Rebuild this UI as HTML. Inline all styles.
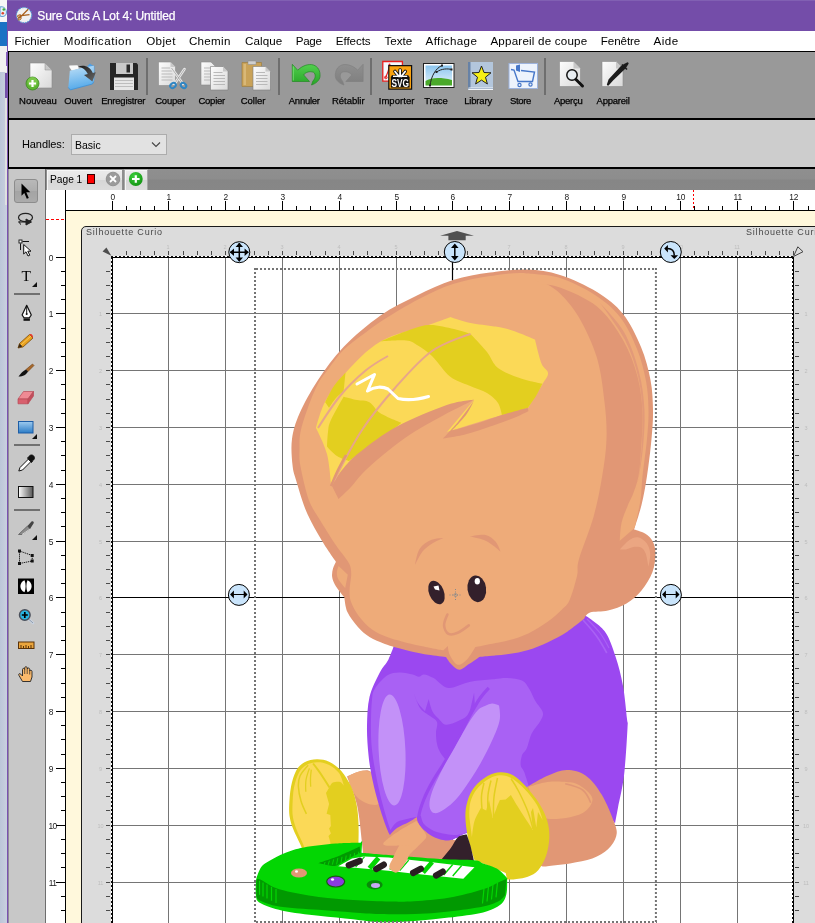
<!DOCTYPE html>
<html lang="fr"><head><meta charset="utf-8"><title>Sure Cuts A Lot 4: Untitled</title>
<style>
*{margin:0;padding:0;box-sizing:border-box}
html,body{width:815px;height:923px;overflow:hidden;background:#fff}
body{position:relative;font-family:"Liberation Sans",sans-serif;font-size:11px;color:#000}
.a{position:absolute;will-change:transform}
#title{left:7px;top:0;width:808px;height:31px;background:#744da9;border-top:1px solid #8160b3}
#pb{left:7px;top:31px;width:1px;height:892px;background:#7a52b0}
#title span{position:absolute;left:30.3px;top:7.5px;color:#fff;font-size:12px;letter-spacing:-0.1px;white-space:nowrap;-webkit-text-stroke:0.25px #fff}
#menu{left:8px;top:31px;width:807px;height:20px;background:#fff}
#menu span{position:absolute;top:2.8px;font-size:11.6px;white-space:nowrap}
#tb{left:8px;top:51px;width:815px;height:69px;background:#999;border-top:1px solid #000;border-left:1px solid #000;border-bottom:2px solid #000}
.tl{position:absolute;top:95.3px;font-size:9.5px;white-space:nowrap;color:#000;-webkit-text-stroke:0.25px #000}
.sep{position:absolute;top:58px;width:2px;height:37px;background:#6e6e6e}
#opt{left:8px;top:120px;width:815px;height:49px;background:#cdcdcd;border-left:1px solid #000;border-bottom:2px solid #000}
#tabs{left:46px;top:169px;width:769px;height:21px;background:linear-gradient(#8f8f8f,#8d8d8d 48%,#868686 52%,#878787)}
#pal{left:8px;top:169px;width:38px;height:760px;background:#c8c8c8;border-left:1px solid #5a4a7a}
</style></head>
<body>
<div class="a" style="left:0;top:0;width:7px;height:22px;background:#f6f6f6"></div>
<svg class="a" style="left:0;top:4px" width="7" height="16" viewBox="0 0 7 16"><path d="M0 3C3 2 6 4 6.500 8C6.500 11 5 12.500 2 12.500L0 12Z" fill="#e6eef6" stroke="#5b9bd0" stroke-width="1"/><circle cx="3.800" cy="5.500" r="1.300" fill="#3fae3a"/><circle cx="2.800" cy="9.300" r="1.300" fill="#e0442c"/></svg>
<div class="a" style="left:0;top:22px;width:7px;height:24px;background:#1b72c4"></div>
<div class="a" style="left:0;top:46px;width:7px;height:26px;background:#f1f1f1"></div>
<div class="a" style="left:0;top:72px;width:7px;height:851px;background:linear-gradient(90deg,#bcc6d9,#c9d0df)"></div>
<div class="a" style="left:5px;top:72px;width:2px;height:133px;background:#e0e1e0"></div>
<div class="a" style="left:6px;top:52px;width:1px;height:14px;background:#8a62c0"></div>
<div class="a" style="left:5px;top:73px;width:2px;height:25px;background:#7450a8"></div>
<div id="title" class="a"><svg class="a" style="left:8px;top:5px" width="18" height="18" viewBox="0 0 18 18"><circle cx="9.050" cy="9.100" r="7.600" fill="#f1f1f1" stroke="#5fa9d9" stroke-width="1.200" stroke-dasharray="1.300 1.100"/><path d="M4 12.400L13.200 3.200M4.500 9.800L14.500 8.600" stroke="#a8601c" stroke-width="1.300" fill="none"/><ellipse cx="4.600" cy="12.500" rx="1.800" ry="1.200" fill="none" stroke="#a8601c" stroke-width="1" transform="rotate(-40 4.600 12.500)"/><ellipse cx="4.300" cy="10" rx="1.700" ry="1.100" fill="none" stroke="#a8601c" stroke-width="1" transform="rotate(-10 4.300 10)"/></svg>
<span>Sure Cuts A Lot 4: Untitled</span></div>
<div id="pb" class="a"></div><div id="menu" class="a"><span style="left:6.6px;letter-spacing:0.08px">Fichier</span><span style="left:55.7px;letter-spacing:0.54px">Modification</span><span style="left:138.2px;letter-spacing:0.37px">Objet</span><span style="left:180.9px;letter-spacing:0.31px">Chemin</span><span style="left:237.1px;letter-spacing:0.07px">Calque</span><span style="left:287.7px;letter-spacing:-0.26px">Page</span><span style="left:327.8px;letter-spacing:-0.07px">Effects</span><span style="left:376.4px;letter-spacing:-0.00px">Texte</span><span style="left:417.6px;letter-spacing:0.39px">Affichage</span><span style="left:482.4px;letter-spacing:0.21px">Appareil de coupe</span><span style="left:592.8px;letter-spacing:-0.08px">Fenêtre</span><span style="left:645.5px;letter-spacing:0.53px">Aide</span></div>
<div id="tb" class="a"></div>
<svg class="a" style="left:0;top:52px" width="815" height="66" viewBox="0 52 815 66">
<defs>
<linearGradient id="pg" x1="0" y1="0" x2="1" y2="1"><stop offset="0" stop-color="#fdfdfd"/><stop offset="1" stop-color="#d9d9d9"/></linearGradient>
<linearGradient id="fold" x1="0" y1="0" x2="0.2" y2="1"><stop offset="0" stop-color="#bfe0f7"/><stop offset="1" stop-color="#55aaea"/></linearGradient><linearGradient id="arr" x1="0" y1="0" x2="1" y2="1"><stop offset="0" stop-color="#1a1a1a"/><stop offset="1" stop-color="#6a6a6a"/></linearGradient>
<linearGradient id="grn" x1="0" y1="0" x2="0" y2="1"><stop offset="0" stop-color="#52cf4e"/><stop offset="1" stop-color="#27a527"/></linearGradient>
<linearGradient id="gry" x1="0" y1="0" x2="0" y2="1"><stop offset="0" stop-color="#8f8f8f"/><stop offset="1" stop-color="#7e7e7e"/></linearGradient>
<linearGradient id="sky" x1="0" y1="0" x2="0" y2="1"><stop offset="0" stop-color="#8cc6ef"/><stop offset="1" stop-color="#e4f2fb"/></linearGradient>
</defs>
<!-- Nouveau -->
<g transform="translate(30 63)"><path d="M0 0H15L22 7V25H0Z" fill="url(#pg)" stroke="#8c8c8c" stroke-width=".6"/><path d="M15 0V7H22Z" fill="#c8c8c8" stroke="#8c8c8c" stroke-width=".5"/></g>
<circle cx="32.5" cy="83.5" r="6.5" fill="#5cb531" stroke="#3d8a1f" stroke-width=".8"/>
<circle cx="32.5" cy="82" r="5" fill="#8fd45c" opacity=".6"/>
<path d="M29 83.5H36M32.5 80V87" stroke="#fff" stroke-width="2.2"/>
<!-- Ouvert -->
<path d="M87.500 66L90 63.500L92 65L94.400 66V80L87.500 82Z" fill="#4f9fe4"/>
<path d="M69.300 67V65.500L77.500 65.200L79 68.500L72 71Z" fill="#fafafa"/>
<path d="M69.800 70.700L83.600 67.500L93.900 65.800V81.500L92.400 84L70.300 89.900L68.300 87.400Z" fill="url(#fold)"/>
<path d="M68.300 87.400L70.300 89.900L92.400 84L93.900 81.500" fill="none" stroke="#3d8fd6" stroke-width=".8"/>
<path d="M78.200 66.600C84 64.500 90 66.500 92.800 73L95.800 72.200L92.400 81.500L84 74.900L87.800 74C86 70 82.500 67.500 78.200 66.600Z" fill="url(#arr)"/>
<!-- Enregistrer -->
<path d="M110 63H136.500L138 64.500V90H110Z" fill="#262626"/>
<path d="M116 63H133V74H116Z" fill="#c9c9c9"/><path d="M126.500 64.500H130V72.500H126.500Z" fill="#2a2a2a"/>
<path d="M114 77.500H134V90H114Z" fill="#e6e6e6"/><path d="M115 80.500H133M115 83.500H133M115 86.500H133" stroke="#bdbdbd" stroke-width="1"/>
<!-- Couper -->
<g transform="translate(158.500 62)"><path d="M0 0H12L17 5V23.500H0Z" fill="url(#pg)" stroke="#8c8c8c" stroke-width=".6"/><path d="M12 0V5H17Z" fill="#c8c8c8"/><path d="M3 6H12M3 9H14M3 12H14M3 15H14M3 18H14" stroke="#b9b9b9"/></g>
<path d="M171.500 68L183 84M184.500 69L174.500 84" stroke="#e9e9e9" stroke-width="2.600" stroke-linecap="round"/>
<path d="M171.500 68L183 84M184.500 69L174.500 84" stroke="#8a8a8a" stroke-width=".6" fill="none"/>
<ellipse cx="173" cy="85.500" rx="3" ry="2.300" fill="none" stroke="#2f86c4" stroke-width="2" transform="rotate(-35 173 85.500)"/>
<ellipse cx="183.500" cy="85.500" rx="3" ry="2.300" fill="none" stroke="#2f86c4" stroke-width="2" transform="rotate(40 183.500 85.500)"/>
<!-- Copier -->
<g transform="translate(201 62)"><path d="M0 0H10L14.500 4.500V23H0Z" fill="url(#pg)" stroke="#8c8c8c" stroke-width=".6"/><path d="M3 6H11M3 9H11M3 12H11M3 15H11M3 18H11" stroke="#b9b9b9"/></g>
<g transform="translate(210.500 66.500)"><path d="M0 0H12.500L17.500 5V23.500H0Z" fill="url(#pg)" stroke="#7c7c7c" stroke-width=".6"/><path d="M12.500 0V5H17.500Z" fill="#c8c8c8"/><path d="M3 6H12M3 9H14.500M3 12H14.500M3 15H14.500M3 18H14.500" stroke="#b9b9b9"/></g>
<!-- Coller -->
<path d="M242 62.500H261.500V86.500H242Z" fill="#c9a258" stroke="#9b7a3a" stroke-width=".6"/>
<path d="M243.500 64H246V85H243.500Z" fill="#d9b877"/>
<path d="M248 61H256V64.500H248Z" fill="#cfcfcf" stroke="#8a8a8a" stroke-width=".5"/>
<g transform="translate(253 66.500)"><path d="M0 0H12.500L17.500 5V23.500H0Z" fill="url(#pg)" stroke="#7c7c7c" stroke-width=".6"/><path d="M12.500 0V5H17.500Z" fill="#c8c8c8"/><path d="M3 6H12M3 9H14.500M3 12H14.500M3 15H14.500M3 18H14.500" stroke="#b9b9b9"/></g>
<!-- Annuler -->
<path d="M292.300 64.300V81.500H309.500L303.600 74.900C306 72 309.500 71 313.400 72.200C316 74 315.800 78 312.800 81.200L311.500 85C316 83.500 319.500 80.500 320 76.600C320.500 71 318 66.500 313.400 65C308 63.500 302 66 297.700 70.200Z" fill="url(#grn)" stroke="#238a23" stroke-width=".7" stroke-linejoin="round"/>
<path d="M293.300 66.500V80.500" stroke="#7fe07a" stroke-width=".8"/>
<!-- Retablir -->
<path d="M363.1 64.3 V81.5 H345.9 L351.8 74.9 C349.4 72.0 345.9 71.0 342.0 72.2 C339.4 74.0 339.6 78.0 342.6 81.2 L343.9 85.0 C339.4 83.5 335.9 80.5 335.4 76.6 C334.9 71.0 337.4 66.5 342.0 65.0 C347.4 63.5 353.4 66.0 357.7 70.2 Z" fill="url(#gry)" stroke="#808080" stroke-width=".7" stroke-linejoin="round"/>
<!-- Importer -->
<path d="M382.800 61.500H402.400V81.200H382.800Z" fill="#f4fbff" stroke="#e82020" stroke-width="1.300"/>
<path d="M385.500 78C387.500 74 389 70 389.500 64.500" stroke="#e82020" stroke-width="1.200" fill="none"/><circle cx="385.800" cy="77.500" r="1.300" fill="none" stroke="#e82020" stroke-width="1"/><circle cx="389.500" cy="64.500" r="1" fill="#e82020"/>
<path d="M388.800 65.600H411.600V89.100H388.800Z" fill="#f9a20e" stroke="#111" stroke-width="1.200"/>
<g stroke="#111" stroke-width="3.600" stroke-linecap="round"><path d="M400.100 70V76M395 71.500L399 76.500M405.200 71.500L401.200 76.500M393 76.800H407.200"/></g>
<rect x="390.800" y="76.800" width="18.800" height="10.800" fill="#111"/>
<g stroke="#fff" stroke-width="1.800" stroke-linecap="round"><path d="M400.100 70V76M395 71.500L399 76.500M405.200 71.500L401.200 76.500"/></g>
<path d="M393 76.300H407.200" stroke="#fff" stroke-width="1.400"/>
<text x="400.200" y="86.600" font-family="Liberation Sans, sans-serif" font-weight="bold" font-size="10.800" fill="#fff" text-anchor="middle" textLength="17.500" lengthAdjust="spacingAndGlyphs">SVG</text>
<!-- Trace -->
<rect x="423.500" y="63.500" width="30.500" height="24" fill="#fff" stroke="#222" stroke-width="1"/>
<rect x="425.500" y="65.500" width="26.500" height="20" fill="url(#sky)"/>
<path d="M425.500 81C431 77.500 440 77 452 80V85.500H425.500Z" fill="#4aa92a"/>
<path d="M430 86C431 76 436 68 442 65.500M436.500 72C442 68.500 447 68.500 452 69.500" stroke="#222" stroke-width="1" fill="none"/>
<path d="M429 84.500h2v2h-2zM435.500 71h2v2h-2zM441 64.500h2v2h-2zM450.500 68.500h2v2h-2z" fill="#222"/>
<!-- Library -->
<path d="M468 62H493V90H468Z" fill="#b3c6dc"/>
<path d="M468 62H470.500V88H468Z" fill="#6782a6"/>
<path d="M468.500 87.500H493V90H468.500Z" fill="#f3f6fa"/><path d="M468 88.500H493" stroke="#7a93b5" stroke-width=".6"/>
<path d="M481.500 66L484 72.500L491 72.800L485.500 77.200L487.400 84L481.500 80.100L475.600 84L477.500 77.200L472 72.800L479 72.500Z" fill="#f6ef16" stroke="#222" stroke-width="1" stroke-linejoin="round"/>
<!-- Store -->
<rect x="509" y="63.500" width="28.500" height="25" fill="#edf3fc" stroke="#9db3dd" stroke-width="1"/>
<path d="M511 69.500L514 70L518 81.500H532.500L534.500 72L521 70.500" fill="none" stroke="#4677c9" stroke-width="1.400"/>
<path d="M516 65.500L520 64.500V72L516 70.500Z" fill="#4677c9"/>
<circle cx="519.500" cy="85" r="1.600" fill="none" stroke="#4677c9" stroke-width="1.200"/><circle cx="530.500" cy="84.500" r="1.600" fill="none" stroke="#4677c9" stroke-width="1.200"/>
<!-- Apercu -->
<g transform="translate(559.500 61.500)"><path d="M0 0H14L21 7V25H0Z" fill="url(#pg)" stroke="#8c8c8c" stroke-width=".6"/><path d="M14 0V7H21Z" fill="#c8c8c8"/></g>
<circle cx="572" cy="75" r="5.200" fill="#e9eef2" stroke="#111" stroke-width="1.500"/>
<path d="M576 79.500L582.500 86" stroke="#111" stroke-width="3" stroke-linecap="round"/>
<!-- Appareil -->
<g transform="translate(602 61.500)"><path d="M0 0H14L21 7V25H0Z" fill="url(#pg)" stroke="#8c8c8c" stroke-width=".6"/><path d="M14 0V7H21Z" fill="#c8c8c8"/></g>
<path d="M627.500 63.500L625 67.500L612 80L608 84.500L609.500 80L621.500 67L625.500 64.500Z" fill="#1c1c1c" stroke="#1c1c1c" stroke-width="2.200" stroke-linejoin="round"/>
<path d="M622 64.500L627 69.500" stroke="#1c1c1c" stroke-width="1.600"/>
</svg>
<div class="tl" style="left:19.1px;letter-spacing:-0.05px">Nouveau</div><div class="tl" style="left:64.2px;letter-spacing:-0.10px">Ouvert</div><div class="tl" style="left:101.2px;letter-spacing:-0.23px">Enregistrer</div><div class="tl" style="left:155.2px;letter-spacing:-0.21px">Couper</div><div class="tl" style="left:198.4px;letter-spacing:-0.22px">Copier</div><div class="tl" style="left:240.7px;letter-spacing:-0.00px">Coller</div><div class="tl" style="left:288.8px;letter-spacing:-0.26px">Annuler</div><div class="tl" style="left:332.0px;letter-spacing:-0.02px">Rétablir</div><div class="tl" style="left:378.7px;letter-spacing:0.06px">Importer</div><div class="tl" style="left:424.3px;letter-spacing:-0.13px">Trace</div><div class="tl" style="left:464.2px;letter-spacing:-0.18px">Library</div><div class="tl" style="left:510.1px;letter-spacing:-0.35px">Store</div><div class="tl" style="left:553.9px;letter-spacing:-0.26px">Aperçu</div><div class="tl" style="left:596.5px;letter-spacing:-0.21px">Appareil</div><div class="sep" style="left:145.5px"></div><div class="sep" style="left:277.5px"></div><div class="sep" style="left:370px"></div><div class="sep" style="left:543.5px"></div>
<div id="opt" class="a"></div>
<div class="a" style="left:22px;top:138px;font-size:11px;letter-spacing:-.1px;white-space:nowrap" id="hl">Handles:</div>
<div class="a" style="left:71px;top:134px;width:96px;height:21px;background:#e2e2e2;border:1px solid #acacac"></div>
<div class="a" style="left:75px;top:139px;font-size:10.5px;white-space:nowrap" id="bs">Basic</div>
<svg class="a" style="left:151px;top:141px" width="10" height="7" viewBox="0 0 10 7"><path d="M1 1.500L5 5.500L9 1.500" fill="none" stroke="#444" stroke-width="1.100"/></svg>
<div id="tabs" class="a"></div>
<div class="a" style="left:46px;top:169px;width:77px;height:21px;background:linear-gradient(#ececec,#e4e4e4 50%,#d6d6d6 52%,#dcdcdc);border:1px solid #8f8f8f;border-bottom:none;box-shadow:inset 1px 1px 0 #f6f6f6"></div>
<div class="a" style="left:49.500px;top:174px;font-size:10.200px;white-space:nowrap" id="pg1">Page 1</div>
<div class="a" style="left:87px;top:174px;width:8px;height:10px;background:#f00;border:1px solid #300"></div>
<svg class="a" style="left:105px;top:171px" width="16" height="16" viewBox="0 0 16 16"><circle cx="8" cy="8" r="6.800" fill="#9b9b9b" stroke="#888" stroke-width=".8"/><path d="M5 5L11 11M11 5L5 11" stroke="#fff" stroke-width="1.800"/></svg>
<div class="a" style="left:123.500px;top:169px;width:23.500px;height:21px;background:linear-gradient(#ececec,#e2e2e2 50%,#d6d6d6 52%,#dcdcdc);border:1px solid #a8a8a8;border-bottom:none;box-shadow:inset 1px 1px 0 #f6f6f6"></div>
<svg class="a" style="left:128px;top:171px" width="16" height="16" viewBox="0 0 16 16"><defs><radialGradient id="gb" cx=".4" cy=".3" r=".8"><stop offset="0" stop-color="#3ed03e"/><stop offset="1" stop-color="#0f8f0f"/></radialGradient></defs><circle cx="7.800" cy="8" r="6.900" fill="url(#gb)"/><path d="M4 8H11.600M7.800 4.200V11.800" stroke="#fff" stroke-width="2.200"/></svg>
<div id="pal" class="a"></div>
<svg class="a" style="left:8px;top:169px" width="38" height="754" viewBox="8 169 38 754">
<defs>
<linearGradient id="selb" x1="0" y1="0" x2="0" y2="1"><stop offset="0" stop-color="#b9b9b9"/><stop offset=".5" stop-color="#adadad"/><stop offset=".52" stop-color="#a4a4a4"/><stop offset="1" stop-color="#ababab"/></linearGradient>
<linearGradient id="blu" x1="0" y1="0" x2="0" y2="1"><stop offset="0" stop-color="#9fcbef"/><stop offset="1" stop-color="#2b7cc6"/></linearGradient>
<linearGradient id="bw" x1="0" y1="0" x2="1" y2="0"><stop offset="0" stop-color="#fff"/><stop offset="1" stop-color="#555"/></linearGradient>
</defs>
<rect x="8" y="169" width="1" height="754" fill="#8f8a9a"/>
<rect x="45" y="169" width="1" height="754" fill="#6e6e6e"/>
<!-- select -->
<rect x="14.500" y="179.500" width="23" height="23" rx="2.500" fill="url(#selb)" stroke="#8c8c8c"/>
<path d="M21.500 183.500V195.700L24.300 193L26.800 198.800L28.800 198L26.300 192.300H30.300Z" fill="#000"/>
<!-- lasso -->
<ellipse cx="25.500" cy="217.500" rx="7" ry="4.200" fill="none" stroke="#222" stroke-width="1.200"/>
<path d="M18 222H26M26 219L31.500 222L26 225Z" fill="#222" stroke="#222" stroke-width="1"/>
<path d="M20.500 220.500C19 222 19.500 224 21 224.500" fill="none" stroke="#222" stroke-width="1"/>
<!-- node select -->
<rect x="19" y="240" width="3" height="3" fill="#fff" stroke="#111" stroke-width=".9"/>
<path d="M22.500 241.500H29M20.500 243.500V250" stroke="#111" stroke-width="1"/>
<path d="M23.700 244.500V254L26 251.800L28 256L29.800 255.200L27.800 251.200H31Z" fill="#fff" stroke="#111" stroke-width="1"/>
<!-- T -->
<text x="26.300" y="280.500" font-family="Liberation Serif, serif" font-size="15.500" text-anchor="middle" fill="#000">T</text>
<path d="M37 282V287H32Z" fill="#111"/>
<rect x="14" y="293" width="26" height="2" fill="#707070"/>
<!-- pen nib -->
<path d="M26.700 305.300L31.300 315L29.300 317.800H24.100L22.100 315Z" fill="#fff" stroke="#111" stroke-width="1.200" stroke-linejoin="round"/>
<path d="M26.700 306V313.500" stroke="#111" stroke-width="1"/><circle cx="26.700" cy="314" r="1" fill="#111"/>
<rect x="23.500" y="318.500" width="6.400" height="2.300" fill="#111"/>
<!-- pencil -->
<path d="M18 348L19.500 343.500L29.500 334.500L33 338L23 347Z" fill="#e9a11e" stroke="#7a4a0a" stroke-width=".8" stroke-linejoin="round"/>
<path d="M29.500 334.500C31 333 33.500 335 33 338L31 336Z" fill="#e8382c"/>
<path d="M18 348L19.500 343.500L22.500 346.500Z" fill="#3a2a1a"/>
<path d="M21 345L31 336" stroke="#f7c75a" stroke-width="1"/>
<!-- brush -->
<path d="M26 369.500L32.500 364L34 365.500L28 371.500Z" fill="#a8692c" stroke="#6e3f14" stroke-width=".6"/>
<path d="M18.500 376.500C21 373 23 371 26 369.500L28 371.500C26.500 374.500 23 376.500 18.500 376.500Z" fill="#111"/>
<!-- eraser -->
<path d="M18 399L23.500 391.500H33.500L28 399Z" fill="#ef8a94" stroke="#b84a58" stroke-width=".7"/>
<path d="M18 399H28V403.800H18Z" fill="#d8606e" stroke="#b84a58" stroke-width=".7"/>
<path d="M28 399L33.500 391.500V396L28 403.800Z" fill="#c24e5c" stroke="#b84a58" stroke-width=".7"/>
<!-- rectangle -->
<rect x="18.500" y="421.500" width="14.500" height="11.500" fill="url(#blu)" stroke="#1d5da6"/>
<path d="M37 434V439H32Z" fill="#111"/>
<rect x="14" y="444" width="26" height="2" fill="#707070"/>
<!-- eyedropper -->
<path d="M18.800 471L20 467.500L28.500 459L31 461.500L22.500 470Z" fill="#fff" stroke="#111" stroke-width="1"/>
<path d="M27.500 458L29 456.500C30 454.500 33 454.500 34 456.500C35 458 34 460 32.500 461L31.500 462.500Z" fill="#111" stroke="#111" stroke-width="1"/>
<!-- gradient -->
<rect x="18.500" y="486.500" width="14.500" height="11" fill="url(#bw)" stroke="#111"/>
<rect x="14" y="509" width="26" height="2" fill="#707070"/>
<!-- knife -->
<path d="M18.500 534.500L27.500 526L30 529L22 534.500Z" fill="#8c8c8c" stroke="#555" stroke-width=".7"/>
<path d="M27.500 526L31.500 521.500C33 520.500 34.500 522 33.500 523.500L30 529Z" fill="#444"/>
<path d="M22 534.500L30 529" stroke="#eee" stroke-width=".8"/>
<path d="M37 535V540H32Z" fill="#111"/>
<!-- distort -->
<path d="M19.500 551L32.200 555.500V561L19.500 563.500Z" fill="none" stroke="#111" stroke-width="1" stroke-dasharray="1.200 .8"/>
<path d="M18 549.500h3v3h-3zM30.700 554h3v3h-3zM30.700 559.500h3v3h-3zM18 562h3v3h-3z" fill="#111"/>
<!-- warp -->
<rect x="18" y="578.500" width="16" height="15.500" fill="#000"/>
<path d="M24.500 580.200C19 582.500 19 590 24.500 592.300C26 589 26 583.500 24.500 580.200Z" fill="#fff"/>
<path d="M27.500 580.200C33 582.500 33 590 27.500 592.300C26 589 26 583.500 27.500 580.200Z" fill="#fff"/>
<!-- zoom -->
<path d="M28.500 619L33 623" stroke="#c9d3e0" stroke-width="2.600" stroke-linecap="round"/>
<path d="M28.500 619L33 623" stroke="#6a7688" stroke-width=".6"/>
<circle cx="24.800" cy="615" r="5.300" fill="#27b5e2" stroke="#4a4f5a" stroke-width="1.500"/>
<path d="M21.800 615H27.800M24.800 612V618" stroke="#000" stroke-width="1.700"/>
<!-- ruler -->
<rect x="18.500" y="642" width="15.500" height="6.500" fill="#eaa53c" stroke="#5a3208" stroke-width="1"/>
<path d="M21 645V648M23.500 646V648M26 645V648M28.500 646V648M31 645V648" stroke="#5a3208" stroke-width="1"/>
<!-- hand -->
<path d="M22.500 681.500L19 675.500C18 674 19.500 673 20.800 674.200L22.500 676V669.500C22.500 668 24.500 668 24.700 669.500V667.800C24.900 666.300 27 666.300 27.200 667.800V669C27.400 667.600 29.500 667.700 29.700 669.200V671C30 669.800 32 670 32 671.500V677L30.500 681.500Z" fill="#fbba6c" stroke="#222" stroke-width=".9" stroke-linejoin="round"/>
<path d="M24.700 669.500V674M27.200 669V674M29.700 671V674.500" stroke="#222" stroke-width=".7"/>
</svg>
<svg class="a" style="left:46px;top:190px" width="769" height="733" viewBox="46 190 769 733" font-family="Liberation Sans, sans-serif" font-size="8.4" fill="#1a1a1a"><rect x="46" y="190" width="769" height="21" fill="#fff"/><rect x="46" y="190" width="20" height="733" fill="#fff"/><rect x="65" y="190" width="1" height="733" fill="#000"/><rect x="65" y="210" width="750" height="1" fill="#000"/><text x="112.8" y="199.8" text-anchor="middle">0</text><text x="168.8" y="199.8" text-anchor="middle">1</text><text x="225.8" y="199.8" text-anchor="middle">2</text><text x="282.8" y="199.8" text-anchor="middle">3</text><text x="339.8" y="199.8" text-anchor="middle">4</text><text x="396.8" y="199.8" text-anchor="middle">5</text><text x="452.8" y="199.8" text-anchor="middle">6</text><text x="509.8" y="199.8" text-anchor="middle">7</text><text x="566.8" y="199.8" text-anchor="middle">8</text><text x="623.8" y="199.8" text-anchor="middle">9</text><text x="680.8" y="199.8" text-anchor="middle">10</text><text x="737.8" y="199.8" text-anchor="middle">11</text><text x="793.8" y="199.8" text-anchor="middle">12</text><text x="51" y="260.8" text-anchor="middle" >0</text><text x="51" y="316.8" text-anchor="middle" >1</text><text x="51" y="373.8" text-anchor="middle" >2</text><text x="51" y="430.8" text-anchor="middle" >3</text><text x="51" y="487.8" text-anchor="middle" >4</text><text x="51" y="544.8" text-anchor="middle" >5</text><text x="51" y="600.8" text-anchor="middle" >6</text><text x="51" y="657.8" text-anchor="middle" >7</text><text x="51" y="714.8" text-anchor="middle" >8</text><text x="51" y="771.8" text-anchor="middle" >9</text><text x="52.5" y="828.8" text-anchor="middle" letter-spacing='-0.6'>10</text><text x="52.5" y="885.8" text-anchor="middle" letter-spacing='-0.6'>11</text><path d="M112 201h1v9h-1zM126 206h1v4h-1zM140 206h1v4h-1zM154 206h1v4h-1zM168 201h1v9h-1zM183 206h1v4h-1zM197 206h1v4h-1zM211 206h1v4h-1zM225 201h1v9h-1zM239 206h1v4h-1zM254 206h1v4h-1zM268 206h1v4h-1zM282 201h1v9h-1zM296 206h1v4h-1zM310 206h1v4h-1zM325 206h1v4h-1zM339 201h1v9h-1zM353 206h1v4h-1zM367 206h1v4h-1zM381 206h1v4h-1zM396 201h1v9h-1zM410 206h1v4h-1zM424 206h1v4h-1zM438 206h1v4h-1zM452 201h1v9h-1zM467 206h1v4h-1zM481 206h1v4h-1zM495 206h1v4h-1zM509 201h1v9h-1zM523 206h1v4h-1zM538 206h1v4h-1zM552 206h1v4h-1zM566 201h1v9h-1zM580 206h1v4h-1zM594 206h1v4h-1zM609 206h1v4h-1zM623 201h1v9h-1zM637 206h1v4h-1zM651 206h1v4h-1zM665 206h1v4h-1zM680 201h1v9h-1zM694 206h1v4h-1zM708 206h1v4h-1zM722 206h1v4h-1zM737 201h1v9h-1zM751 206h1v4h-1zM765 206h1v4h-1zM779 206h1v4h-1zM793 201h1v9h-1zM808 206h1v4h-1zM56 257h9v1h-9zM61 271h4v1h-4zM61 285h4v1h-4zM61 299h4v1h-4zM56 313h9v1h-9zM61 328h4v1h-4zM61 342h4v1h-4zM61 356h4v1h-4zM56 370h9v1h-9zM61 384h4v1h-4zM61 399h4v1h-4zM61 413h4v1h-4zM56 427h9v1h-9zM61 441h4v1h-4zM61 455h4v1h-4zM61 470h4v1h-4zM56 484h9v1h-9zM61 498h4v1h-4zM61 512h4v1h-4zM61 526h4v1h-4zM56 541h9v1h-9zM61 555h4v1h-4zM61 569h4v1h-4zM61 583h4v1h-4zM56 597h9v1h-9zM61 612h4v1h-4zM61 626h4v1h-4zM61 640h4v1h-4zM56 654h9v1h-9zM61 668h4v1h-4zM61 683h4v1h-4zM61 697h4v1h-4zM56 711h9v1h-9zM61 725h4v1h-4zM61 739h4v1h-4zM61 754h4v1h-4zM56 768h9v1h-9zM61 782h4v1h-4zM61 796h4v1h-4zM61 810h4v1h-4zM56 825h9v1h-9zM61 839h4v1h-4zM61 853h4v1h-4zM61 867h4v1h-4zM56 882h9v1h-9zM61 896h4v1h-4zM61 910h4v1h-4z" fill="#000"/><path d="M46 219.5H65" stroke="#f00" stroke-width="1" stroke-dasharray="3 2"/><path d="M693.5 190V210" stroke="#f00" stroke-width="1" stroke-dasharray="2 2"/></svg>
<svg class="a" style="left:66px;top:211px" width="749" height="712" viewBox="66 211 749 712" font-family="Liberation Sans, sans-serif"><rect x="66" y="211" width="749" height="712" fill="#fff8dc"/><rect x="81.5" y="226.5" width="760" height="720" rx="4.5" fill="#dcdcdc" stroke="#1a1a1a" stroke-width="1"/><text x="86" y="235" font-size="9" fill="#484848" letter-spacing="0.8">Silhouette Curio</text><text x="746" y="235" font-size="9" fill="#484848" letter-spacing="0.8">Silhouette Curio</text><rect x="112" y="257" width="682" height="666" fill="#fff"/><path d="M168 257h1v700h-1zM225 257h1v700h-1zM282 257h1v700h-1zM339 257h1v700h-1zM396 257h1v700h-1zM452 257h1v700h-1zM509 257h1v700h-1zM566 257h1v700h-1zM623 257h1v700h-1zM680 257h1v700h-1zM737 257h1v700h-1zM112 313h681v1h-681zM112 370h681v1h-681zM112 427h681v1h-681zM112 484h681v1h-681zM112 541h681v1h-681zM112 654h681v1h-681zM112 711h681v1h-681zM112 768h681v1h-681zM112 825h681v1h-681zM112 882h681v1h-681z" fill="#757575"/><rect x="112" y="597" width="681" height="1" fill="#000"/><path d="M111 256.5H794" stroke="#fff" stroke-width="1"/><path d="M111 256.5H794" stroke="#111" stroke-dasharray="2 2"/><path d="M111.5 257V923" stroke="#fff" stroke-width="1"/><path d="M111.5 257V923" stroke="#111" stroke-dasharray="2 2"/><path d="M792.5 257V923" stroke="#fff" stroke-width="1"/><path d="M792.5 257V923" stroke="#111" stroke-dasharray="2 2"/><path d="M112 257.5H794M112.5 257V923M793.5 257V923" stroke="#000" stroke-width="1" fill="none"/><path d="M126 251h1v4h-1zM140 251h1v4h-1zM154 251h1v4h-1zM168 251h1v4h-1zM183 251h1v4h-1zM197 251h1v4h-1zM211 251h1v4h-1zM225 251h1v4h-1zM239 251h1v4h-1zM254 251h1v4h-1zM268 251h1v4h-1zM282 251h1v4h-1zM296 251h1v4h-1zM310 251h1v4h-1zM325 251h1v4h-1zM339 251h1v4h-1zM353 251h1v4h-1zM367 251h1v4h-1zM381 251h1v4h-1zM396 251h1v4h-1zM410 251h1v4h-1zM424 251h1v4h-1zM438 251h1v4h-1zM452 251h1v4h-1zM467 251h1v4h-1zM481 251h1v4h-1zM495 251h1v4h-1zM509 251h1v4h-1zM523 251h1v4h-1zM538 251h1v4h-1zM552 251h1v4h-1zM566 251h1v4h-1zM580 251h1v4h-1zM594 251h1v4h-1zM609 251h1v4h-1zM623 251h1v4h-1zM637 251h1v4h-1zM651 251h1v4h-1zM665 251h1v4h-1zM680 251h1v4h-1zM694 251h1v4h-1zM708 251h1v4h-1zM722 251h1v4h-1zM737 251h1v4h-1zM751 251h1v4h-1zM765 251h1v4h-1zM779 251h1v4h-1zM793 251h1v4h-1zM106 271h4v1h-4zM795 271h4v1h-4zM106 285h4v1h-4zM795 285h4v1h-4zM106 299h4v1h-4zM795 299h4v1h-4zM106 313h4v1h-4zM795 313h4v1h-4zM106 328h4v1h-4zM795 328h4v1h-4zM106 342h4v1h-4zM795 342h4v1h-4zM106 356h4v1h-4zM795 356h4v1h-4zM106 370h4v1h-4zM795 370h4v1h-4zM106 384h4v1h-4zM795 384h4v1h-4zM106 399h4v1h-4zM795 399h4v1h-4zM106 413h4v1h-4zM795 413h4v1h-4zM106 427h4v1h-4zM795 427h4v1h-4zM106 441h4v1h-4zM795 441h4v1h-4zM106 455h4v1h-4zM795 455h4v1h-4zM106 470h4v1h-4zM795 470h4v1h-4zM106 484h4v1h-4zM795 484h4v1h-4zM106 498h4v1h-4zM795 498h4v1h-4zM106 512h4v1h-4zM795 512h4v1h-4zM106 526h4v1h-4zM795 526h4v1h-4zM106 541h4v1h-4zM795 541h4v1h-4zM106 555h4v1h-4zM795 555h4v1h-4zM106 569h4v1h-4zM795 569h4v1h-4zM106 583h4v1h-4zM795 583h4v1h-4zM106 597h4v1h-4zM795 597h4v1h-4zM106 612h4v1h-4zM795 612h4v1h-4zM106 626h4v1h-4zM795 626h4v1h-4zM106 640h4v1h-4zM795 640h4v1h-4zM106 654h4v1h-4zM795 654h4v1h-4zM106 668h4v1h-4zM795 668h4v1h-4zM106 683h4v1h-4zM795 683h4v1h-4zM106 697h4v1h-4zM795 697h4v1h-4zM106 711h4v1h-4zM795 711h4v1h-4zM106 725h4v1h-4zM795 725h4v1h-4zM106 739h4v1h-4zM795 739h4v1h-4zM106 754h4v1h-4zM795 754h4v1h-4zM106 768h4v1h-4zM795 768h4v1h-4zM106 782h4v1h-4zM795 782h4v1h-4zM106 796h4v1h-4zM795 796h4v1h-4zM106 810h4v1h-4zM795 810h4v1h-4zM106 825h4v1h-4zM795 825h4v1h-4zM106 839h4v1h-4zM795 839h4v1h-4zM106 853h4v1h-4zM795 853h4v1h-4zM106 867h4v1h-4zM795 867h4v1h-4zM106 882h4v1h-4zM795 882h4v1h-4zM106 896h4v1h-4zM795 896h4v1h-4zM106 910h4v1h-4zM795 910h4v1h-4z" fill="#4a4a4a"/><text x="168" y="248.5" font-size="5.5" fill="#bdbdbd" text-anchor="middle">1</text><text x="225" y="248.5" font-size="5.5" fill="#bdbdbd" text-anchor="middle">2</text><text x="282" y="248.5" font-size="5.5" fill="#bdbdbd" text-anchor="middle">3</text><text x="339" y="248.5" font-size="5.5" fill="#bdbdbd" text-anchor="middle">4</text><text x="396" y="248.5" font-size="5.5" fill="#bdbdbd" text-anchor="middle">5</text><text x="452" y="248.5" font-size="5.5" fill="#bdbdbd" text-anchor="middle">6</text><text x="509" y="248.5" font-size="5.5" fill="#bdbdbd" text-anchor="middle">7</text><text x="566" y="248.5" font-size="5.5" fill="#bdbdbd" text-anchor="middle">8</text><text x="623" y="248.5" font-size="5.5" fill="#bdbdbd" text-anchor="middle">9</text><text x="680" y="248.5" font-size="5.5" fill="#bdbdbd" text-anchor="middle">10</text><text x="737" y="248.5" font-size="5.5" fill="#bdbdbd" text-anchor="middle">11</text><text x="100.5" y="315.5" font-size="5.5" fill="#bdbdbd" text-anchor="middle">1</text><text x="806" y="315.5" font-size="5.5" fill="#bdbdbd" text-anchor="middle">1</text><text x="100.5" y="372.5" font-size="5.5" fill="#bdbdbd" text-anchor="middle">2</text><text x="806" y="372.5" font-size="5.5" fill="#bdbdbd" text-anchor="middle">2</text><text x="100.5" y="429.5" font-size="5.5" fill="#bdbdbd" text-anchor="middle">3</text><text x="806" y="429.5" font-size="5.5" fill="#bdbdbd" text-anchor="middle">3</text><text x="100.5" y="486.5" font-size="5.5" fill="#bdbdbd" text-anchor="middle">4</text><text x="806" y="486.5" font-size="5.5" fill="#bdbdbd" text-anchor="middle">4</text><text x="100.5" y="543.5" font-size="5.5" fill="#bdbdbd" text-anchor="middle">5</text><text x="806" y="543.5" font-size="5.5" fill="#bdbdbd" text-anchor="middle">5</text><text x="100.5" y="599.5" font-size="5.5" fill="#bdbdbd" text-anchor="middle">6</text><text x="806" y="599.5" font-size="5.5" fill="#bdbdbd" text-anchor="middle">6</text><text x="100.5" y="656.5" font-size="5.5" fill="#bdbdbd" text-anchor="middle">7</text><text x="806" y="656.5" font-size="5.5" fill="#bdbdbd" text-anchor="middle">7</text><text x="100.5" y="713.5" font-size="5.5" fill="#bdbdbd" text-anchor="middle">8</text><text x="806" y="713.5" font-size="5.5" fill="#bdbdbd" text-anchor="middle">8</text><text x="100.5" y="770.5" font-size="5.5" fill="#bdbdbd" text-anchor="middle">9</text><text x="806" y="770.5" font-size="5.5" fill="#bdbdbd" text-anchor="middle">9</text><text x="100.5" y="827.5" font-size="5.5" fill="#bdbdbd" text-anchor="middle">10</text><text x="806" y="827.5" font-size="5.5" fill="#bdbdbd" text-anchor="middle">10</text><text x="100.5" y="884.5" font-size="5.5" fill="#bdbdbd" text-anchor="middle">11</text><text x="806" y="884.5" font-size="5.5" fill="#bdbdbd" text-anchor="middle">11</text><path d="M102.600 251.500L106.400 247.400L111.300 255.700Z" fill="#4d4d4d"/><path d="M793.500 256.500L797.800 246.800L803 251.700Z" fill="none" stroke="#444" stroke-width="1"/></svg>
<svg class="a" style="left:240px;top:260px" width="430" height="663" viewBox="240 260 430 663">
<path d="M347.0 776.5C347.0 776.5 356.8 771.7 361.0 771.0C365.2 770.3 367.8 769.3 372.0 772.5C376.2 775.7 382.2 782.9 386.0 790.0C389.8 797.1 395.0 815.0 395.0 815.0L435.0 815.0C435.0 815.0 444.2 833.0 450.0 838.0C455.8 843.0 466.7 838.8 470.0 845.0C473.3 851.2 470.0 875.0 470.0 875.0L365.0 875.0C365.0 875.0 363.3 854.7 362.0 843.0C360.7 831.3 359.5 816.1 357.0 805.0C354.5 793.9 347.0 776.5 347.0 776.5Z" fill="#e19775"/>
<path d="M348.5 776.0C348.5 776.0 357.1 771.6 361.0 771.0C364.9 770.4 368.7 771.7 372.0 772.5C375.3 773.3 381.0 776.0 381.0 776.0C381.0 776.0 382.7 796.2 381.0 801.0C379.3 805.8 374.8 805.0 371.0 804.5C367.2 804.0 361.5 801.2 358.0 798.0C354.5 794.8 351.6 789.2 350.0 785.5C348.4 781.8 348.5 776.0 348.5 776.0Z" fill="#eeab79"/>
<path d="M396.0 640.0C396.0 640.0 391.3 653.8 388.6 659.2C385.9 664.6 383.0 666.2 379.8 672.5C376.6 678.8 371.6 688.1 369.5 697.0C367.4 705.9 367.2 716.3 367.0 726.0C366.8 735.7 367.6 746.0 368.5 755.0C369.4 764.0 370.7 771.3 372.5 780.0C374.3 788.7 377.1 798.8 379.5 807.0C381.9 815.2 385.2 824.3 387.0 829.0C388.8 833.7 390.0 835.0 390.0 835.0C390.0 835.0 393.8 830.2 397.0 828.0C400.2 825.8 405.7 823.8 409.0 822.0C412.3 820.2 417.0 817.0 417.0 817.0C417.0 817.0 416.7 820.4 419.0 823.5C421.3 826.6 426.2 832.7 431.0 835.5C435.8 838.3 442.7 840.7 448.0 840.5C453.3 840.3 459.3 835.9 463.0 834.5C466.7 833.1 470.0 832.0 470.0 832.0C470.0 832.0 505.0 805.3 520.0 800.0C535.0 794.7 546.7 798.3 560.0 800.0C573.3 801.7 590.8 806.1 600.0 810.0C609.2 813.9 615.0 823.5 615.0 823.5C615.0 823.5 616.5 815.5 618.0 807.5C619.5 799.5 622.4 788.8 624.0 775.5C625.6 762.2 627.0 737.4 627.5 728.0C628.0 718.6 627.8 726.0 627.0 719.0C626.2 712.0 624.9 696.4 623.0 686.0C621.1 675.6 618.6 665.7 615.5 656.5C612.4 647.3 609.7 637.9 604.5 631.0C599.3 624.1 584.5 615.0 584.5 615.0L560.0 600.0L420.0 600.0L396.0 640.0Z" fill="#9b48f0"/>
<path d="M374.7 689.0C377.2 684.9 382.9 678.4 387.0 675.6C391.1 672.8 395.0 672.6 399.3 672.4C403.6 672.2 409.5 673.7 412.8 674.4C416.1 675.1 417.1 676.8 418.9 676.8C420.7 676.8 421.4 674.2 423.8 674.4C426.2 674.6 429.5 675.8 433.6 678.0C437.7 680.2 442.2 687.3 448.3 687.9C454.4 688.5 463.0 683.1 470.4 681.7C477.8 680.3 486.4 679.9 492.5 679.3C498.6 678.7 502.3 677.8 507.2 678.0C512.1 678.2 518.3 678.7 522.0 680.5C525.7 682.3 527.0 685.5 529.3 689.0C531.5 692.5 533.2 697.4 535.5 701.3C537.8 705.2 542.0 709.1 542.8 712.4C543.6 715.7 542.2 717.5 540.4 721.0C538.6 724.5 534.0 728.8 531.8 733.3C529.5 737.8 528.5 744.3 526.9 748.0C525.3 751.7 523.0 752.4 522.0 755.3C521.0 758.2 520.3 762.3 520.7 765.2C521.1 768.1 522.9 768.4 524.4 772.5C525.9 776.6 530.0 790.0 530.0 790.0L478.0 800.0L468.0 832.0C468.0 832.0 461.7 834.7 458.0 835.0C454.3 835.3 450.0 834.7 446.0 834.0C442.0 833.3 437.7 832.7 434.0 831.0C430.3 829.3 426.2 826.5 424.0 824.0C421.8 821.5 421.0 816.0 421.0 816.0C421.0 816.0 413.0 817.5 409.0 818.5C405.0 819.5 400.1 820.1 397.0 822.0C393.9 823.9 390.5 830.0 390.5 830.0C390.5 830.0 388.2 824.0 386.5 818.0C384.8 812.0 381.9 802.0 380.0 794.0C378.1 786.0 376.4 778.2 375.0 770.0C373.6 761.8 372.2 753.3 371.5 745.0C370.8 736.7 370.9 727.5 371.0 720.0C371.1 712.5 371.4 705.2 372.0 700.0C372.6 694.8 372.2 693.1 374.7 689.0Z" fill="#a961f4"/>
<path d="M412.8 690.3C412.8 690.3 415.7 699.1 417.7 702.6C419.7 706.1 425.0 711.2 425.0 711.2L428.7 698.9C428.7 698.9 430.8 707.9 432.4 711.2C434.0 714.5 436.2 716.2 438.5 718.5C440.8 720.8 442.6 724.3 445.9 724.7C449.2 725.1 454.7 722.5 458.2 721.0C461.7 719.5 464.7 718.0 466.7 716.0C468.7 714.0 470.4 708.7 470.4 708.7L474.1 692.8L475.0 707.0L488.8 687.9C488.8 687.9 483.3 694.3 480.2 699.0C477.1 703.7 474.1 709.5 470.4 716.0C466.7 722.5 462.3 730.8 458.2 738.2C454.1 745.6 445.9 760.2 445.9 760.2C445.9 760.2 441.5 754.7 440.0 752.0C438.5 749.3 437.7 747.2 437.0 744.0C436.3 740.8 436.0 736.7 436.0 733.0C436.0 729.3 438.0 724.8 437.0 722.0C436.0 719.2 432.8 718.3 430.0 716.0C427.2 713.7 422.9 712.3 420.0 708.0C417.1 703.7 412.8 690.3 412.8 690.3Z" fill="#9b48f0"/>
<path d="M488.8 687.9C488.8 687.9 483.3 693.6 480.2 698.0C477.1 702.4 474.1 707.8 470.4 714.5C466.7 721.2 462.3 730.6 458.2 738.2C454.1 745.8 450.0 753.2 445.9 760.2C441.8 767.2 437.3 773.4 433.6 779.9C429.9 786.4 426.2 793.4 423.8 799.5C421.4 805.6 419.1 812.2 418.9 816.7C418.7 821.2 420.2 823.6 422.6 826.5C425.1 829.4 429.7 832.1 433.6 833.9C437.5 835.6 441.5 836.6 445.9 837.0C450.3 837.4 460.0 836.0 460.0 836.0" fill="none" stroke="#9b48f0" stroke-width="3.2" stroke-linejoin="round"/>
<path d="M583.0 620.0C583.0 620.0 592.5 630.5 596.5 636.0C600.5 641.5 606.8 653.0 606.8 653.0" fill="none" stroke="#a961f4" stroke-width="1.6"/>
<path d="M587.0 619.0C587.0 619.0 596.3 628.2 600.0 633.0C603.7 637.8 609.0 648.0 609.0 648.0" fill="none" stroke="#a961f4" stroke-width="1.2"/>
<ellipse cx="392" cy="750" rx="13.400" ry="55.500" fill="#c391f8" transform="rotate(-2.500 392 750)"/>
<path d="M485.0 706.0C485.0 706.0 489.7 703.6 492.0 703.5C494.3 703.4 499.0 705.5 499.0 705.5C499.0 705.5 501.0 714.4 499.5 721.0C498.0 727.6 493.9 736.7 490.0 745.0C486.1 753.3 481.3 762.3 476.0 771.0C470.7 779.7 463.3 790.6 458.0 797.0C452.7 803.4 448.0 806.8 444.0 809.5C440.0 812.2 436.4 813.6 434.0 813.0C431.6 812.4 429.8 809.5 429.5 806.0C429.2 802.5 429.9 798.0 432.0 792.0C434.1 786.0 438.2 777.5 442.0 770.0C445.8 762.5 450.7 754.7 455.0 747.0C459.3 739.3 464.2 730.2 468.0 724.0C471.8 717.8 475.2 713.0 478.0 710.0C480.8 707.0 485.0 706.0 485.0 706.0Z" fill="#c391f8"/>
<path d="M453.0 280.0C465.2 276.2 477.7 274.2 490.0 272.5C502.3 270.8 515.3 269.1 527.0 269.5C538.7 269.9 548.3 271.2 560.0 275.0C571.7 278.8 586.5 285.5 597.0 292.0C607.5 298.5 615.7 304.8 623.0 314.0C630.3 323.2 636.4 336.0 641.0 347.0C645.6 358.0 648.5 369.5 650.5 380.0C652.5 390.5 652.8 400.2 653.0 410.0C653.2 419.8 652.5 428.0 651.5 439.0C650.5 450.0 648.7 465.0 647.0 476.0C645.3 487.0 643.7 496.1 641.5 505.0C639.3 513.9 634.0 529.5 634.0 529.5C634.0 529.5 641.9 531.6 645.0 533.5C648.1 535.4 650.8 537.7 652.5 541.0C654.2 544.3 655.5 548.3 655.5 553.5C655.5 558.7 654.8 565.8 652.5 572.0C650.2 578.2 645.8 585.2 641.5 590.5C637.2 595.8 632.1 600.2 626.5 603.5C620.9 606.8 614.1 609.0 608.0 610.5C601.9 612.0 594.0 611.1 590.0 612.5C586.0 613.9 584.3 618.6 584.3 618.6C584.3 618.6 573.6 627.5 567.6 631.4C561.6 635.3 554.5 639.1 548.0 642.2C541.5 645.3 534.8 648.0 528.3 650.0C521.8 652.0 515.2 653.0 508.7 654.0C502.1 655.0 493.9 655.5 489.0 656.0C484.1 656.5 479.3 656.9 479.3 656.9C479.3 656.9 472.7 661.7 469.4 663.8C466.1 665.9 462.5 669.5 459.6 669.7C456.7 669.9 454.1 666.9 451.8 664.8C449.5 662.7 446.0 657.0 446.0 657.0C446.0 657.0 433.8 655.6 428.4 654.8C423.0 653.9 419.0 653.1 413.6 651.9C408.2 650.7 400.9 648.8 396.0 647.4C391.1 646.0 388.6 645.5 384.2 643.8C379.8 642.1 373.9 639.9 369.5 637.1C365.1 634.3 361.4 631.0 357.7 626.8C354.0 622.6 349.6 617.0 347.4 612.1C345.2 607.2 344.4 597.4 344.4 597.4C344.4 597.4 341.6 594.2 340.0 592.0C338.4 589.8 336.0 586.8 334.7 584.2C333.4 581.6 332.4 579.0 332.1 576.4C331.8 573.8 332.4 571.0 333.0 568.6C333.6 566.2 336.0 561.7 336.0 561.7C336.0 561.7 327.2 549.5 322.4 541.4C317.6 533.3 311.4 523.2 307.0 513.0C302.6 502.8 298.4 488.0 296.0 480.0C293.6 472.0 293.2 471.8 292.5 465.0C291.8 458.2 290.8 447.6 292.0 439.0C293.2 430.4 295.2 423.3 299.5 413.5C303.8 403.7 310.7 391.1 318.0 380.0C325.3 368.9 333.1 357.8 343.5 347.0C353.9 336.2 368.2 324.1 380.5 315.5C392.8 306.9 404.9 301.4 417.0 295.5C429.1 289.6 440.8 283.8 453.0 280.0Z" fill="#e19775"/>
<path d="M453.0 284.0C464.8 280.2 477.7 277.8 490.0 276.0C502.3 274.2 517.8 272.3 527.0 273.5C536.2 274.7 545.0 283.0 545.0 283.0C545.0 283.0 554.8 288.2 560.5 294.0C566.2 299.8 572.9 306.8 579.0 317.5C585.1 328.2 592.8 343.9 597.0 358.0C601.2 372.1 602.9 388.5 604.5 402.0C606.1 415.5 606.9 426.7 606.5 439.0C606.1 451.3 604.4 463.0 602.2 476.0C600.0 489.0 597.4 503.2 593.5 517.0C589.6 530.8 581.8 549.2 579.0 559.0C576.2 568.8 578.6 569.2 577.0 576.0C575.4 582.8 572.1 594.4 569.6 600.0C567.1 605.6 565.3 606.2 561.7 609.8C558.1 613.4 553.6 617.7 548.0 621.6C542.4 625.5 534.8 630.3 528.3 633.4C521.8 636.5 515.2 638.4 508.7 640.2C502.1 642.0 494.6 643.1 489.0 644.2C483.4 645.4 475.3 647.1 475.3 647.1C475.3 647.1 470.4 656.0 467.5 658.9C464.6 661.8 460.6 665.4 457.7 664.8C454.8 664.1 451.4 658.1 449.8 655.0C448.2 651.9 447.9 646.1 447.9 646.1L443.1 650.4C443.1 650.4 427.9 647.5 421.0 646.0C414.1 644.5 407.5 643.0 401.9 641.5C396.2 640.0 392.0 639.1 387.1 637.1C382.2 635.1 377.1 633.2 372.4 629.8C367.7 626.4 362.7 621.2 359.1 616.5C355.5 611.8 352.6 606.2 351.0 601.8C349.4 597.4 349.6 594.5 349.6 590.0C349.6 585.5 351.2 579.0 351.2 574.7C351.2 570.4 351.1 567.9 349.5 564.3C347.9 560.7 344.4 556.8 341.7 553.0C339.0 549.2 337.0 546.9 333.4 541.4C329.8 535.9 324.1 526.9 320.0 520.0C315.9 513.1 312.1 508.9 308.8 500.0C305.6 491.1 302.1 474.9 300.5 466.6C298.9 458.3 299.5 455.8 299.5 450.0C299.5 444.2 299.2 438.7 300.5 432.0C301.8 425.3 304.3 417.8 307.1 410.0C309.9 402.2 313.9 391.8 317.4 385.0C320.9 378.2 323.8 375.2 328.2 369.3C332.6 363.4 337.8 355.7 343.9 349.6C350.0 343.6 358.3 338.0 365.0 333.0C371.7 328.0 375.0 325.2 384.0 319.5C393.0 313.8 407.5 304.9 419.0 299.0C430.5 293.1 441.2 287.8 453.0 284.0Z" fill="#eeab79"/>
<path d="M527.0 273.5C527.0 273.5 548.7 274.4 560.0 278.0C571.3 281.6 585.0 288.5 595.0 295.0C605.0 301.5 613.0 308.0 620.0 317.0C627.0 326.0 632.7 338.3 637.0 349.0C641.3 359.7 644.1 370.8 646.0 381.0C647.9 391.2 648.3 400.3 648.5 410.0C648.7 419.7 648.0 428.0 647.0 439.0C646.0 450.0 643.6 465.8 642.5 476.0C641.4 486.2 641.8 491.3 640.5 500.0C639.2 508.7 634.6 528.0 634.6 528.0L619.8 540.7C619.8 540.7 620.2 528.5 621.6 522.5C623.0 516.5 626.1 509.8 628.0 505.0C629.9 500.2 631.2 498.8 633.0 494.0C634.8 489.2 637.2 483.3 638.5 476.0C639.8 468.7 640.3 460.5 641.0 450.0C641.7 439.5 643.1 425.2 642.5 413.0C641.9 400.8 640.8 388.7 637.5 376.5C634.2 364.3 629.8 351.7 623.0 340.0C616.2 328.3 607.5 315.2 597.0 306.5C586.5 297.8 569.2 291.2 560.0 287.5C550.8 283.8 542.0 284.5 542.0 284.5L527.0 273.5Z" fill="#eeab79"/>
<path d="M600.0 303.0C600.0 303.0 617.5 320.5 624.0 332.0C630.5 343.5 635.6 358.8 639.0 372.0C642.4 385.2 643.9 397.7 644.5 411.0C645.1 424.3 643.8 438.8 642.5 452.0C641.2 465.2 636.5 490.0 636.5 490.0C636.5 490.0 638.6 478.3 639.5 470.0C640.4 461.7 641.5 450.0 642.0 440.0C642.5 430.0 643.2 420.7 642.5 410.0C641.8 399.3 640.9 387.7 638.0 376.0C635.1 364.3 631.3 352.2 625.0 340.0C618.7 327.8 600.0 303.0 600.0 303.0Z" fill="#e39a79"/>
<path d="M450.5 317.0C450.5 317.0 461.3 321.1 470.5 323.0C479.7 324.9 494.8 325.8 505.5 328.5C516.2 331.2 535.0 339.5 535.0 339.5C535.0 339.5 539.3 357.9 541.5 363.5C543.7 369.1 547.8 369.6 548.0 373.0C548.2 376.4 545.8 378.2 542.5 384.0C539.2 389.8 528.0 408.0 528.0 408.0C528.0 408.0 528.3 409.8 524.0 411.0C519.7 412.2 514.8 411.5 502.0 415.0C489.2 418.5 447.0 432.0 447.0 432.0L474.0 400.0C474.0 400.0 415.8 417.2 395.0 428.0C374.2 438.8 359.7 455.5 349.0 465.0C338.3 474.5 331.0 485.0 331.0 485.0C331.0 485.0 329.5 463.5 327.0 454.0C324.5 444.5 316.0 428.0 316.0 428.0C316.0 428.0 320.1 411.2 325.0 402.0C329.9 392.8 336.2 383.1 345.5 373.0C354.8 362.9 366.7 349.5 380.5 341.5C394.3 333.5 416.8 329.1 428.5 325.0C440.2 320.9 450.5 317.0 450.5 317.0Z" fill="#fbd957"/>
<path d="M380.5 341.5C380.5 341.5 396.0 334.8 404.0 332.0C412.0 329.2 420.0 325.5 428.3 325.0C436.6 324.5 446.9 327.5 454.0 329.0C461.1 330.5 470.6 334.0 470.6 334.0C470.6 334.0 482.4 346.3 487.0 352.0C491.6 357.7 492.4 363.6 498.0 368.0C503.6 372.4 512.9 375.7 520.3 378.3C527.7 380.9 542.4 383.8 542.4 383.8C542.4 383.8 538.5 392.0 536.0 396.0C533.5 400.0 527.7 408.0 527.7 408.0C527.7 408.0 519.3 411.3 515.0 412.5C510.7 413.7 501.9 415.0 501.9 415.0C501.9 415.0 500.5 406.7 498.0 403.0C495.5 399.3 491.8 395.9 487.0 393.0C482.2 390.1 475.2 388.2 469.0 385.5C462.8 382.8 456.2 381.4 450.0 376.5C443.8 371.6 437.5 361.2 432.0 356.0C426.5 350.8 421.3 347.6 417.0 345.0C412.7 342.4 412.1 341.1 406.0 340.5C399.9 339.9 380.5 341.5 380.5 341.5Z" fill="#e3cf1f"/>
<path d="M343.6 396.7C343.6 396.7 352.7 399.1 357.0 400.0C361.3 400.9 365.5 400.0 369.4 402.2C373.3 404.4 375.2 409.9 380.4 413.3C385.6 416.7 400.7 422.5 400.7 422.5C400.7 422.5 403.6 421.6 395.0 428.0C386.4 434.4 349.0 461.0 349.0 461.0C349.0 461.0 340.7 458.4 337.0 456.0C333.3 453.6 327.0 446.4 327.0 446.4C327.0 446.4 327.4 436.3 328.0 432.0C328.6 427.7 328.1 426.5 330.7 420.6C333.3 414.7 343.6 396.7 343.6 396.7Z" fill="#e3cf1f"/>
<path d="M345.5 372.8C345.5 372.8 337.4 381.1 334.0 386.0C330.6 390.9 325.2 402.2 325.2 402.2L329.0 407.8C329.0 407.8 333.6 400.8 336.0 398.0C338.4 395.2 343.6 391.2 343.6 391.2L345.5 372.8Z" fill="#e3cf1f"/>
<path d="M332.0 486.0C332.0 486.0 337.3 475.7 342.0 470.0C346.7 464.3 350.8 459.2 360.0 452.0C369.2 444.8 382.6 434.3 397.0 426.5C411.4 418.7 433.8 409.5 446.7 405.0C459.6 400.5 474.3 399.7 474.3 399.7C474.3 399.7 455.6 408.6 444.0 415.0C432.4 421.4 417.7 429.2 405.0 438.0C392.3 446.8 377.0 459.8 368.0 468.0C359.0 476.2 355.9 481.8 351.0 487.0C346.1 492.2 338.5 499.0 338.5 499.0L332.0 486.0Z" fill="#e19775"/>
<path d="M443.0 438.5C443.0 438.5 452.8 428.3 458.0 422.0C463.2 415.7 474.0 400.5 474.0 400.5C474.0 400.5 469.7 410.0 466.0 415.0C462.3 420.0 452.0 430.5 452.0 430.5C452.0 430.5 466.7 426.6 475.0 424.0C483.3 421.4 493.1 417.8 501.9 415.1C510.7 412.4 527.7 407.8 527.7 407.8L528.5 411.0C528.5 411.0 521.3 415.0 515.0 417.5C508.7 420.0 499.2 423.4 490.9 426.2C482.6 429.0 473.0 432.4 465.0 434.5C457.0 436.6 443.0 438.5 443.0 438.5Z" fill="#e19775"/>
<path d="M318.0 428.0C318.0 428.0 332.2 405.5 340.0 396.0C347.8 386.5 357.0 377.7 365.0 371.0C373.0 364.3 388.0 356.0 388.0 356.0" fill="none" stroke="#e8a68a" stroke-width="2"/>
<path d="M334.5 480.0C334.5 480.0 351.9 445.3 362.0 430.0C372.1 414.7 383.3 401.2 395.0 388.0C406.7 374.8 419.4 360.0 432.0 351.0C444.6 342.0 470.5 334.0 470.5 334.0" fill="none" stroke="#e8a68a" stroke-width="2"/>
<path d="M331.0 486.0C331.0 486.0 335.5 475.2 338.0 470.0C340.5 464.8 346.0 455.0 346.0 455.0" fill="none" stroke="#e19775" stroke-width="2.5"/>
<path d="M357 384L374.5 374.500L367.500 391C375 386 383 386.500 388 389L398 398.500C409 401 420 399 428.500 396.500" fill="none" stroke="#fff" stroke-width="3.100" stroke-linejoin="round" stroke-linecap="round"/>
<path d="M415.0 565.0C415.0 565.0 416.8 553.2 419.5 549.0C422.2 544.8 427.0 541.8 431.0 540.0C435.0 538.2 443.5 538.0 443.5 538.0C443.5 538.0 436.5 540.8 433.0 543.0C429.5 545.2 425.5 547.8 422.5 551.5C419.5 555.2 415.0 565.0 415.0 565.0Z" fill="#e19775"/>
<path d="M470.0 536.5C470.0 536.5 481.2 534.2 485.5 535.0C489.8 535.8 493.0 538.8 495.5 541.5C498.0 544.2 500.5 551.5 500.5 551.5C500.5 551.5 495.8 547.4 493.0 545.5C490.2 543.6 487.8 541.5 484.0 540.0C480.2 538.5 470.0 536.5 470.0 536.5Z" fill="#e19775"/>
<ellipse cx="436.5" cy="592.5" rx="7.400" ry="12.300" fill="#33202b" transform="rotate(-22 436.5 592.5)"/>
<ellipse cx="476.8" cy="588.8" rx="9.300" ry="13.400" fill="#33202b" transform="rotate(-8 476.8 588.8)"/>
<path d="M433.500 586.500L438.500 585.500L439.500 590.500L435 589.500Z" fill="#fff"/>
<ellipse cx="477.300" cy="581.300" rx="2.600" ry="3.300" fill="#fff"/>
<path d="M447.4 614.5C447.4 614.5 443.9 622.2 444.1 625.4C444.3 628.6 446.2 632.7 448.5 633.9C450.8 635.1 454.3 634.2 457.7 632.8C461.1 631.4 468.8 625.4 468.8 625.4" fill="none" stroke="#e19775" stroke-width="2.6" stroke-linecap="round"/>
<path d="M338.6 566.0L347.8 574.7L345.2 588.1C345.2 588.1 339.6 581.7 338.2 579.0C336.8 576.3 336.8 574.3 336.9 572.1C337.0 569.9 338.6 566.0 338.6 566.0Z" fill="#eeab79"/>
<path d="M619.8 549.4C619.8 549.4 626.4 541.9 629.4 539.9C632.4 537.9 635.1 536.7 638.0 537.3C640.9 537.9 644.7 540.5 646.7 543.3C648.7 546.0 649.9 549.9 650.2 553.8C650.5 557.7 648.4 566.8 648.4 566.8C648.4 566.8 646.9 557.0 645.8 553.8C644.6 550.6 643.4 548.9 641.5 547.7C639.6 546.5 637.2 546.5 634.6 546.8C632.0 547.1 628.4 549.0 625.9 549.4C623.4 549.8 619.8 549.4 619.8 549.4Z" fill="#eba682"/>
<!--LOWER-->
<path d="M526.9 787.0C526.9 787.0 541.0 778.5 547.6 775.7C554.2 772.9 560.4 770.0 566.8 770.0C573.2 770.0 580.1 771.6 585.9 775.7C591.7 779.8 597.0 786.8 601.8 794.8C606.6 802.8 612.2 816.7 614.6 823.6C617.0 830.5 617.3 832.1 616.2 836.3C615.1 840.5 612.2 845.3 608.2 849.0C604.2 852.7 598.7 856.2 592.3 858.6C585.9 861.0 578.2 862.1 570.0 863.4C561.8 864.7 542.8 866.6 542.8 866.6L520.0 860.0L526.9 787.0Z" fill="#e19775"/>
<path d="M528.5 787.0C528.5 787.0 541.2 782.8 547.6 782.0C554.0 781.2 561.4 781.5 566.7 782.0C572.0 782.5 575.2 782.6 579.5 785.3C583.8 788.0 591.2 793.8 592.3 798.0C593.4 802.2 589.6 807.6 585.9 810.8C582.2 814.0 576.4 815.9 570.0 817.2C563.6 818.5 553.3 819.7 547.6 818.8C541.9 817.9 536.0 812.0 536.0 812.0L528.5 787.0Z" fill="#eeab79"/>
<path d="M565.2 783.7C565.2 783.7 578.5 786.8 582.7 790.0C587.0 793.2 590.7 802.8 590.7 802.8" fill="none" stroke="#e19775" stroke-width="1.6"/>
<path d="M465.4 817.0C465.3 810.9 465.9 806.4 467.4 801.4C468.9 796.4 471.1 791.3 474.5 787.1C477.9 782.9 483.2 778.6 487.5 776.1C491.8 773.6 496.2 772.3 500.5 772.2C504.8 772.1 509.2 772.9 513.5 775.4C517.8 777.9 522.2 782.3 526.5 787.1C530.8 791.9 536.0 798.4 539.5 804.0C543.0 809.6 545.7 815.3 547.3 820.9C548.9 826.5 549.5 831.9 549.3 837.8C549.1 843.6 547.9 850.6 546.0 856.0C544.1 861.4 541.2 866.8 538.2 870.3C535.2 873.8 531.9 875.3 527.8 876.8C523.7 878.3 517.0 879.0 513.5 879.4C510.0 879.8 507.0 879.4 507.0 879.4L505.7 872.9L474.5 859.9C474.5 859.9 469.5 844.9 468.0 837.8C466.5 830.6 465.5 823.1 465.4 817.0Z" fill="#e3cf1f"/>
<path d="M469.3 817.0L471.9 837.2C471.9 837.2 473.0 825.8 474.5 820.9C476.0 816.0 481.0 807.9 481.0 807.9L486.2 810.5L489.0 800.0L492.7 818.3C492.7 818.3 495.4 810.9 496.6 807.9C497.8 804.9 499.9 800.1 499.9 800.1L505.7 799.5L510.9 794.9C510.9 794.9 515.0 802.1 517.4 806.0C519.8 809.9 522.4 814.0 525.0 818.0C527.6 822.0 533.0 830.0 533.0 830.0L531.0 812.0L533.0 808.0L536.3 827.4L538.0 812.0L542.8 820.3C542.8 820.3 540.0 810.2 537.0 805.0C534.0 799.8 528.7 793.4 524.5 789.0C520.3 784.6 516.0 780.8 512.0 778.5C508.0 776.2 504.4 775.1 500.5 775.2C496.6 775.3 492.5 776.6 488.5 779.0C484.5 781.4 479.5 785.6 476.5 789.5C473.5 793.4 471.5 797.9 470.3 802.5C469.1 807.1 469.3 817.0 469.3 817.0Z" fill="#fbd957"/>
<path d="M484.0 783.0C484.0 783.0 481.8 791.7 481.5 796.0C481.2 800.3 482.0 809.0 482.0 809.0" fill="none" stroke="#e3cf1f" stroke-width="1.5"/>
<path d="M491.0 780.5C491.0 780.5 488.5 790.1 488.0 795.0C487.5 799.9 488.0 810.0 488.0 810.0" fill="none" stroke="#e3cf1f" stroke-width="1.5"/>
<path d="M497.5 778.0C497.5 778.0 494.7 790.5 494.0 797.0C493.3 803.5 493.5 817.0 493.5 817.0" fill="none" stroke="#e3cf1f" stroke-width="1.5"/>
<path d="M511.0 778.5C511.0 778.5 516.2 786.4 519.0 792.0C521.8 797.6 525.7 805.8 528.0 812.0C530.3 818.2 533.0 829.0 533.0 829.0" fill="none" stroke="#e3cf1f" stroke-width="1.5"/>
<path d="M289.2 805.2C289.4 800.1 289.9 792.5 291.0 786.8C292.1 781.1 293.8 775.0 296.0 770.9C298.2 766.8 301.0 764.2 304.5 762.3C308.0 760.3 312.7 759.3 316.8 759.2C320.9 759.1 325.0 759.8 329.1 761.7C333.2 763.7 337.6 766.7 341.3 770.9C345.0 775.1 348.6 781.1 351.2 786.8C353.8 792.5 355.5 799.1 356.7 805.2C357.9 811.3 358.2 817.5 358.5 823.6C358.8 829.7 358.5 842.0 358.5 842.0L358.0 852.0L303.0 852.0C303.0 852.0 302.5 849.4 300.9 845.7C299.3 842.0 295.4 834.5 293.5 829.8C291.6 825.1 290.5 821.6 289.8 817.5C289.1 813.4 289.0 810.3 289.2 805.2Z" fill="#e3cf1f"/>
<path d="M292.5 805.0C292.7 800.0 292.9 792.9 294.0 787.5C295.1 782.1 296.9 776.2 299.0 772.5C301.1 768.8 303.5 766.7 306.5 765.0C309.5 763.3 313.4 762.4 317.0 762.3C320.6 762.2 324.3 762.7 328.0 764.5C331.7 766.3 336.4 769.5 339.0 773.0C341.6 776.5 343.8 785.6 343.8 785.6C343.8 785.6 341.9 782.4 340.1 781.9C338.3 781.4 334.5 781.7 332.8 782.5C331.1 783.3 329.7 786.8 329.7 786.8L326.0 793.0L329.1 804.0L326.6 813.8L330.3 815.0L330.9 826.1L329.1 828.5L330.9 833.4L328.5 835.9L330.3 842.0L330.0 852.0L305.0 852.0C305.0 852.0 304.9 848.8 303.5 845.0C302.1 841.2 298.2 834.1 296.5 829.5C294.8 824.9 293.7 821.6 293.0 817.5C292.3 813.4 292.3 810.0 292.5 805.0Z" fill="#fbd957"/>
<path d="M308.2 765.3C308.2 765.3 301.6 772.4 300.0 776.0C298.4 779.6 298.2 782.6 298.4 786.8C298.6 791.0 299.7 796.5 301.0 801.0C302.3 805.5 306.4 813.8 306.4 813.8" fill="none" stroke="#e3cf1f" stroke-width="1.5"/>
<path d="M309.4 768.4C309.4 768.4 306.6 776.1 306.0 780.0C305.4 783.9 305.8 791.7 305.8 791.7" fill="none" stroke="#e3cf1f" stroke-width="1.3"/>
<path d="M311.3 769.6C311.3 769.6 310.6 775.1 310.5 778.0C310.4 780.9 310.7 786.8 310.7 786.8" fill="none" stroke="#e3cf1f" stroke-width="1.3"/>
<path d="M313.1 763.5C313.1 763.5 317.8 769.5 320.5 773.5C323.2 777.5 329.5 787.5 329.5 787.5" fill="none" stroke="#e3cf1f" stroke-width="2"/>
<path d="M441.0 860.2C441.0 860.2 447.9 851.9 450.8 848.0C453.7 844.1 455.6 839.2 458.2 837.0C460.8 834.8 466.7 834.5 466.7 834.5C466.7 834.5 469.2 841.0 470.4 845.5C471.6 850.0 474.1 861.5 474.1 861.5L468.0 864.0L441.0 860.2Z" fill="#33202b"/>
<path d="M384.5 841.8C386.8 839.3 394.0 834.3 399.3 830.8C404.6 827.3 416.4 821.0 416.4 821.0C416.4 821.0 417.4 822.2 419.0 824.7C420.6 827.2 425.9 832.7 426.3 835.7C426.7 838.8 424.2 839.7 421.3 843.0C418.4 846.3 411.6 852.0 409.0 855.3C406.4 858.6 407.4 859.8 405.4 862.7C403.4 865.6 399.5 871.7 396.8 872.5C394.1 873.3 390.0 870.1 389.4 867.6C388.8 865.1 391.5 861.5 393.1 857.8C394.8 854.1 399.3 845.5 399.3 845.5C399.3 845.5 388.3 846.1 385.8 845.5C383.3 844.9 382.2 844.2 384.5 841.8Z" fill="#eeab79"/>
<path d="M256.0 882.0C256.2 878.5 256.5 877.7 257.5 875.0C258.5 872.3 259.9 868.4 262.0 866.0C264.1 863.6 266.2 862.7 270.0 860.5C273.8 858.3 279.4 855.2 285.0 853.0C290.6 850.8 295.4 849.1 303.8 847.5C312.2 845.9 326.2 844.4 335.7 843.6C345.1 842.8 360.5 842.8 360.5 842.8L362.2 840.8L361.5 852.7C361.5 852.7 375.4 854.0 388.5 855.0C401.6 856.0 425.7 858.1 440.0 859.0C454.3 859.9 467.0 859.5 474.2 860.2C481.4 860.9 479.3 862.0 483.1 863.4C486.9 864.8 492.9 866.3 496.8 868.6C500.7 870.9 504.6 875.3 506.3 877.2C508.0 879.1 507.1 877.1 507.1 880.0C507.1 882.9 507.4 890.3 506.3 894.4C505.2 898.5 504.2 901.7 500.3 904.7C496.4 907.7 491.7 910.2 483.1 912.4C474.5 914.5 460.1 916.2 448.7 917.6C437.2 919.0 425.8 920.2 414.4 921.0C402.9 921.8 390.2 922.5 380.0 922.2C369.8 921.9 363.2 920.4 353.0 919.3C342.8 918.2 330.4 917.2 318.7 915.8C307.0 914.4 292.3 912.8 282.6 910.7C272.9 908.6 264.7 905.5 260.3 903.0C255.9 900.5 256.7 899.5 256.0 896.0C255.3 892.5 255.8 885.5 256.0 882.0Z" fill="#03d603"/>
<path d="M256.5 880.0C256.5 880.0 256.5 878.0 260.3 879.5C264.1 881.0 269.5 886.3 279.2 889.2C288.9 892.1 306.4 895.2 318.7 897.0C331.0 898.8 341.1 899.2 353.0 900.0C364.9 900.8 379.8 901.3 390.0 901.5C400.2 901.7 404.6 901.8 414.4 901.2C424.2 900.6 437.2 899.8 448.7 897.8C460.1 895.8 474.5 891.9 483.1 889.2C491.7 886.5 496.4 883.2 500.3 881.5C504.2 879.8 506.5 879.0 506.5 879.0L505.0 895.0C505.0 895.0 502.2 899.3 498.6 901.2C495.0 903.1 491.4 904.7 483.1 906.4C474.8 908.1 460.1 910.2 448.7 911.5C437.2 912.8 425.8 913.7 414.4 914.1C402.9 914.5 390.2 914.4 380.0 914.1C369.8 913.8 363.2 913.2 353.0 912.5C342.8 911.8 331.0 910.8 318.7 909.8C306.4 908.8 288.8 908.0 279.0 906.4C269.2 904.8 263.8 902.1 260.0 900.4C256.2 898.7 256.5 896.0 256.5 896.0L256.5 880.0Z" fill="#019901"/>
<path d="M259.5 880.8v14.0" stroke="#03d603" stroke-width="1.200"/>
<path d="M263.0 882.5v14.0" stroke="#03d603" stroke-width="1.200"/>
<path d="M267.0 884.5v14.0" stroke="#03d603" stroke-width="1.200"/>
<path d="M271.5 886.8v14.0" stroke="#03d603" stroke-width="1.200"/>
<path d="M276.0 889.0v14.0" stroke="#03d603" stroke-width="1.200"/>
<path d="M484.0 888.5l-1.500 15.0" stroke="#03d603" stroke-width="1.200"/>
<path d="M488.5 886.5l-1.500 15.0" stroke="#03d603" stroke-width="1.200"/>
<path d="M493.0 884.5l-1.500 15.0" stroke="#03d603" stroke-width="1.200"/>
<path d="M497.5 882.4l-1.500 15.0" stroke="#03d603" stroke-width="1.200"/>
<path d="M318.0 863.1C318.0 863.1 333.8 858.0 340.7 855.2C347.6 852.5 359.7 846.6 359.7 846.6L360.3 852.7C360.3 852.7 354.5 855.5 350.5 857.6C346.5 859.7 340.1 864.1 336.4 865.4C332.6 866.7 328.0 865.2 328.0 865.2L318.0 863.1Z" fill="#019901"/>
<path d="M324.0 865.0l1.200 -3.0" stroke="#03d603" stroke-width="1"/>
<path d="M328.2 864.8l1.200 -4.1" stroke="#03d603" stroke-width="1"/>
<path d="M332.4 864.6l1.200 -5.2" stroke="#03d603" stroke-width="1"/>
<path d="M336.6 864.4l1.200 -6.3" stroke="#03d603" stroke-width="1"/>
<path d="M340.8 864.2l1.200 -7.4" stroke="#03d603" stroke-width="1"/>
<path d="M345.0 864.0l1.200 -8.5" stroke="#03d603" stroke-width="1"/>
<path d="M349.2 863.8l1.200 -9.6" stroke="#03d603" stroke-width="1"/>
<path d="M353.4 863.6l1.200 -10.7" stroke="#03d603" stroke-width="1"/>
<path d="M357.6 863.4l1.200 -11.8" stroke="#03d603" stroke-width="1"/>
<path d="M338.200 866.300L352 858.500L364 856.400L388.500 857.600L430 862L474.500 867.200L463.300 878.800L410 873.200L388.500 870.700Z" fill="#fff"/>
<path d="M364.6 856.7l-9 10.500" stroke="#03d603" stroke-width="1.2"/>
<path d="M378.5 857.9l-9 10.500" stroke="#03d603" stroke-width="5.0"/>
<path d="M398.7 859.0l-9 10.500" stroke="#03d603" stroke-width="1.4"/>
<path d="M408.7 860.1l-9 10.500" stroke="#03d603" stroke-width="1.4"/>
<path d="M432.2 862.0l-9 10.500" stroke="#03d603" stroke-width="4.5"/>
<path d="M452.7 864.5l-9 10.500" stroke="#03d603" stroke-width="1.4"/>
<path d="M461.7 865.5l-9 10.500" stroke="#03d603" stroke-width="1.4"/>
<rect x="345.2" y="859.9" width="18.0" height="6.400" rx="3.200" fill="#2a1e22" transform="rotate(-22 354.2 863.1)"/>
<rect x="372.5" y="863.6" width="15.0" height="6.400" rx="3.200" fill="#2a1e22" transform="rotate(-30 380.0 866.8)"/>
<rect x="409.5" y="867.6" width="15.0" height="6.400" rx="3.200" fill="#2a1e22" transform="rotate(-28 417.0 870.8)"/>
<rect x="432.4" y="870.4" width="14.0" height="6.400" rx="3.200" fill="#2a1e22" transform="rotate(-30 439.4 873.6)"/>
<path d="M409.0 855.3C407.9 858.1 407.4 859.8 405.4 862.7C403.4 865.6 399.5 871.7 396.8 872.5C394.1 873.3 390.0 870.1 389.4 867.6C388.8 865.1 391.5 861.5 393.1 857.8C394.8 854.1 399.3 845.5 399.3 845.5L412.0 846.0C412.0 846.0 410.1 852.5 409.0 855.3Z" fill="#eeab79"/>
<ellipse cx="299" cy="873" rx="8" ry="4.600" fill="#e19775"/><ellipse cx="296.500" cy="871.500" rx="1.500" ry="1.200" fill="#fff"/>
<ellipse cx="335.700" cy="881.600" rx="9" ry="5.400" fill="#8a3be0" stroke="#1a5a10" stroke-width="1.200"/><ellipse cx="332.500" cy="879.500" rx="1.600" ry="1.300" fill="#fff"/>
<ellipse cx="374.600" cy="884.800" rx="8" ry="4.600" fill="#0a8a0a"/><ellipse cx="375.500" cy="885.500" rx="4.500" ry="2.400" fill="#c9a8f5"/>
</svg>
<svg class="a" style="left:220px;top:225px" width="470" height="698" viewBox="220 225 470 698">
<path d="M256 269H657M256 922H657M255 268V923M655.900 268V923" stroke="#747474" stroke-width="2" stroke-dasharray="2 2" fill="none"/>
<path d="M452.500 262V280" stroke="#000" stroke-width="1.200"/>
<path d="M457 231L474 235.700H465.700V240.200H448.400V235.700H440.100Z" fill="#505050"/>
<g fill="#c9e4fb" stroke="#000" stroke-width="1"><circle cx="239.300" cy="252.200" r="10.500"/><circle cx="454.800" cy="252" r="10.500"/><circle cx="670.800" cy="252" r="10.500"/><circle cx="238.900" cy="594.900" r="10.500"/><circle cx="670.900" cy="594.900" r="10.500"/></g>
<!-- move -->
<path d="M230.300 252.200H248.300M239.300 243.200V261.200" stroke="#000" stroke-width="1.500"/>
<path d="M229.800 252.200L234 248.500V255.900ZM248.800 252.200L244.600 248.500V255.900ZM239.300 242.700L235.600 246.900H243ZM239.300 261.700L235.600 257.500H243Z" fill="#000"/>
<!-- vertical -->
<path d="M454.800 245V259" stroke="#000" stroke-width="1.500"/>
<path d="M454.800 243.500L451 248H458.600ZM454.800 260.500L451 256H458.600Z" fill="#000"/>
<!-- rotate -->
<path d="M667.500 248.600Q674.300 248.600 674.300 255.500" stroke="#000" stroke-width="1.500" fill="none"/>
<path d="M664.200 248.400L667.900 244.900V252.400ZM670.500 255.200H678.100L674.300 258.900Z" fill="#000"/>
<!-- horizontal x2 -->
<path d="M232 594.500H246M664 594.500H678" stroke="#000" stroke-width="1.100"/>
<path d="M230.100 594.500L233.900 590.400V598.600ZM247.500 594.500L243.700 590.400V598.600ZM662.100 594.500L665.900 590.400V598.600ZM679.500 594.500L675.700 590.400V598.600Z" fill="#000"/>
<!-- centre marker -->
<path d="M455.500 589V601M449.500 595H461.500" stroke="#8a8a8a" stroke-width="1" stroke-dasharray="1 1.500" fill="none"/>
<path d="M453.500 595L455.500 593L457.500 595L455.500 597Z" fill="none" stroke="#8a8a8a" stroke-width=".8"/>
</svg>
</body></html>
